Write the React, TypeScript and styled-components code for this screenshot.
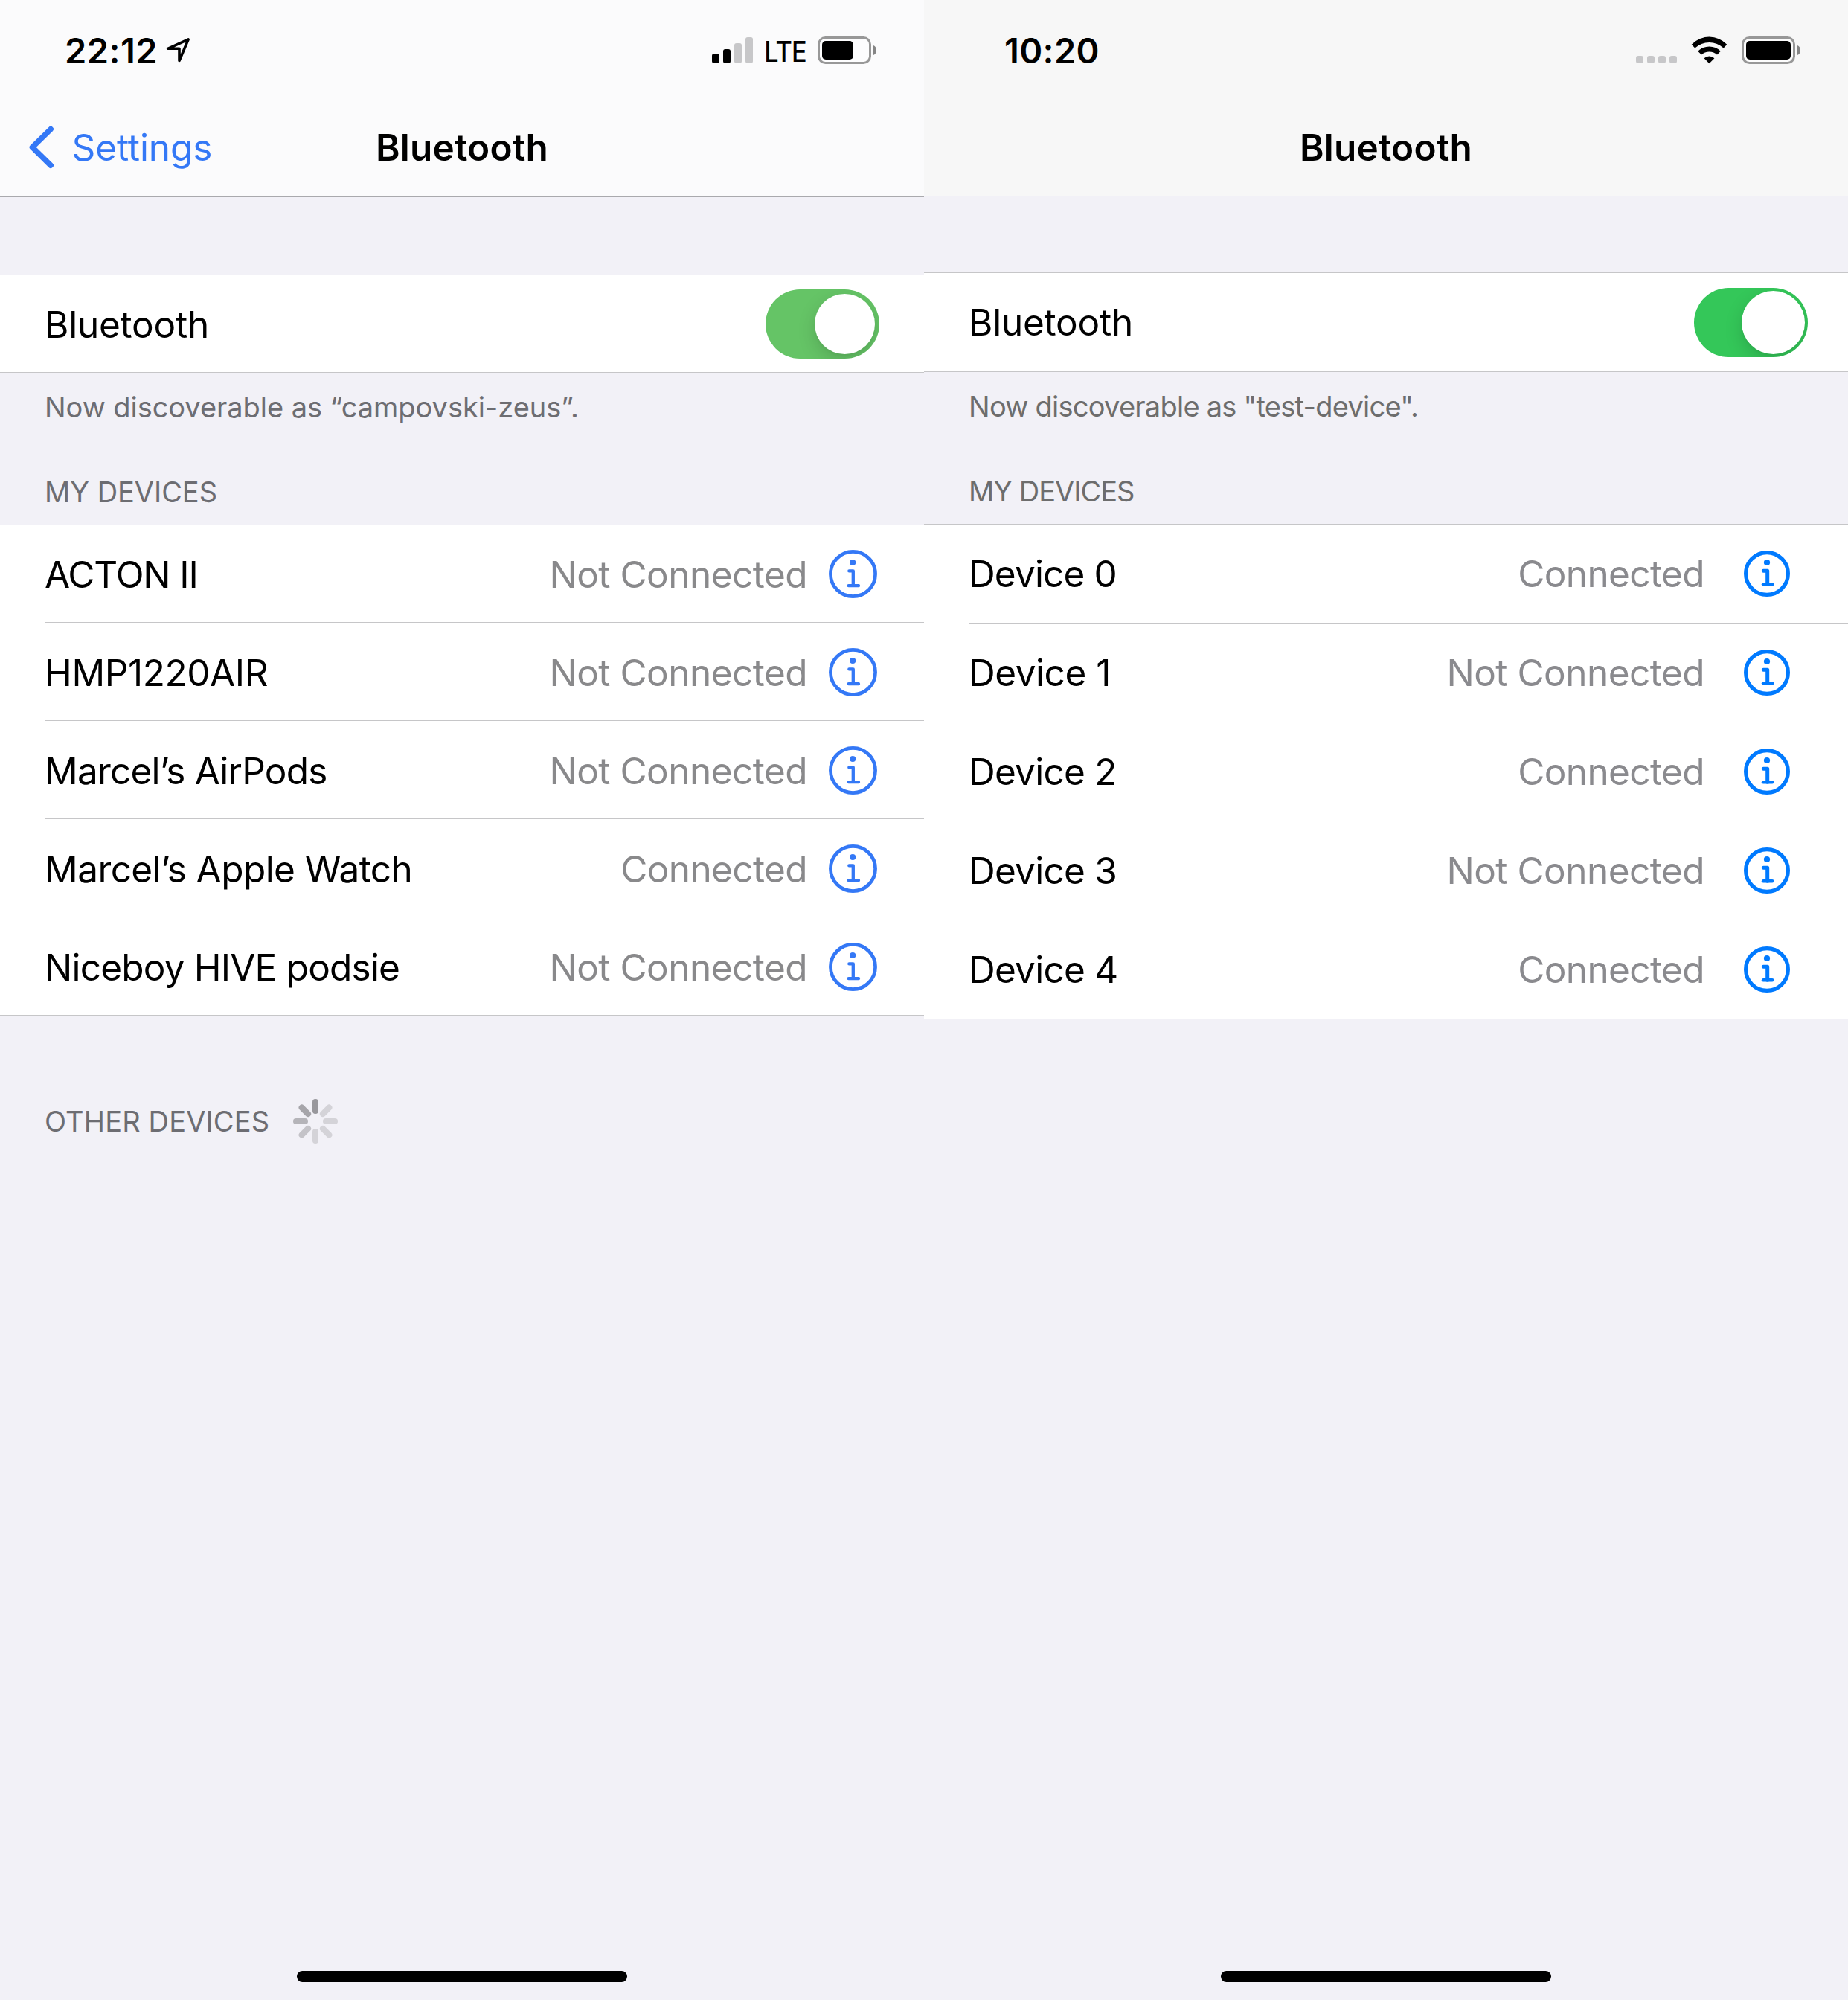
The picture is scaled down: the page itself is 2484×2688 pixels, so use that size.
import React from "react";
import styled, { createGlobalStyle, css, ThemeProvider } from "styled-components";

interface PhoneTheme {
  navBackground: string;
  navBorder: string;
  navHeight: number;
  navPadBottom: number;
  groupTop: number;
  toggleRowHeight: number;
  toggleRowPadTop: number;
  toggleRowPadRight: number;
  labelPadTop: number;
  switchOn: string;
  knobSize: number;
  secondary: string;
  caption: string;
  rowHeight: number;
  firstRowHeight: number;
  rowPadTop: number;
  rowPadRight: number;
  detailGap: number;
  tint: string;
}

type Themed = { theme: PhoneTheme };

const t =
  <K extends keyof PhoneTheme>(key: K) =>
  (p: { theme: unknown }) =>
    (p as Themed).theme[key];

const realDevice: PhoneTheme = {
  navBackground: "#fbfbfc",
  navBorder: "#a9a9ad",
  navHeight: 129,
  navPadBottom: 3,
  groupTop: 104,
  toggleRowHeight: 130,
  toggleRowPadTop: 1,
  toggleRowPadRight: 60,
  labelPadTop: 1,
  switchOn: "#65c466",
  knobSize: 81,
  secondary: "#89898b",
  caption: "#6d6d72",
  rowHeight: 132,
  firstRowHeight: 131,
  rowPadTop: 2,
  rowPadRight: 63,
  detailGap: 29,
  tint: "#3478f6",
};

const simulator: PhoneTheme = {
  navBackground: "#f7f7f7",
  navBorder: "#cfcfd1",
  navHeight: 128,
  navPadBottom: 2,
  groupTop: 102,
  toggleRowHeight: 132,
  toggleRowPadTop: 0,
  toggleRowPadRight: 54,
  labelPadTop: 0,
  switchOn: "#34c759",
  knobSize: 85,
  secondary: "#8a8a8e",
  caption: "#6d6d6d",
  rowHeight: 133,
  firstRowHeight: 133,
  rowPadTop: 0,
  rowPadRight: 78,
  detailGap: 53,
  tint: "#007aff",
};

const SEPARATOR = "#c6c6c8";

const GlobalStyle = createGlobalStyle`
  *, *::before, *::after { box-sizing: border-box; }
  body {
    margin: 0;
    background: #f2f1f7;
    font-family: Inter, Roboto, sans-serif;
    color: #000;
  }
`;

const Screen = styled.main`
  display: grid;
  grid-template-columns: repeat(2, 1242px);
  width: 2484px;
  height: 2688px;
  overflow: hidden;
`;

const Phone = styled.section`
  display: flex;
  flex-direction: column;
  height: 2688px;
  background: #f2f1f7;
`;

const Header = styled.header`
  background: ${t("navBackground")};
  border-bottom: 1px solid ${t("navBorder")};
`;

const StatusBar = styled.div<{ $left: number }>`
  display: flex;
  align-items: center;
  height: 135px;
  padding: 0 64px 0 ${(p) => p.$left}px;
`;

const Clock = styled.time<{ $tracking: number }>`
  font-size: 47px;
  line-height: 57px;
  font-weight: 600;
  letter-spacing: ${(p) => p.$tracking}px;
`;

const LocationSvg = styled.svg`
  width: 36px;
  height: 37px;
  margin-left: 10px;
`;

const StatusIcons = styled.div<{ $gap: number }>`
  display: flex;
  align-items: center;
  gap: ${(p) => p.$gap}px;
  margin-left: auto;
`;

const SignalBars = styled.div`
  display: flex;
  align-items: flex-end;
  gap: 5px;
  height: 35px;
`;

const SignalBar = styled.span<{ $height: number; $active?: boolean }>`
  width: 10px;
  height: ${(p) => p.$height}px;
  border-radius: 3px;
  background: ${(p) => (p.$active ? "#000" : "#c7c7c9")};
`;

const Carrier = styled.span`
  width: 87px;
  padding-top: 3px;
  text-align: center;
  font-size: 38px;
  line-height: 46px;
  font-weight: 500;
  letter-spacing: -1px;
  transform: scaleX(0.9);
`;

const NavBar = styled.nav`
  display: grid;
  grid-template-columns: 1fr auto 1fr;
  align-items: center;
  height: ${t("navHeight")}px;
  padding-bottom: ${t("navPadBottom")}px;
`;

const BackLink = styled.a`
  display: flex;
  align-items: center;
  padding-left: 39px;
  color: ${t("tint")};
  font-size: 49.5px;
  line-height: 60px;
  letter-spacing: -0.1px;
`;

const BackChevron = styled.svg`
  width: 34px;
  height: 58px;
  margin-right: 23.5px;
`;

const NavTitle = styled.h1`
  grid-column: 2;
  margin: 0;
  font-size: 49.5px;
  line-height: 60px;
  font-weight: 600;
  letter-spacing: 0.2px;
`;

const Group = styled.div`
  background: #fff;
  border-top: 1px solid ${SEPARATOR};
`;

const ToggleRow = styled.label`
  display: flex;
  align-items: center;
  justify-content: space-between;
  height: ${t("toggleRowHeight")}px;
  padding: ${t("toggleRowPadTop")}px ${t("toggleRowPadRight")}px 0 60px;
`;

const ToggleGroup = styled(Group)`
  margin-top: ${t("groupTop")}px;
  border-bottom: 1px solid ${SEPARATOR};
`;

const RowLabel = styled.span<{ $tracking?: number }>`
  padding-top: ${t("labelPadTop")}px;
  font-size: 49.5px;
  line-height: 60px;
  letter-spacing: ${(p) => p.$tracking ?? -0.22}px;
  white-space: nowrap;
`;

const Switch = styled.span`
  display: flex;
  align-items: center;
  justify-content: flex-end;
  width: 153px;
  height: 93px;
  padding: 0 ${(p) => (93 - t("knobSize")(p)) / 2}px;
  border-radius: 47px;
  background: ${t("switchOn")};
  overflow: hidden;
`;

const Knob = styled.span`
  width: ${t("knobSize")}px;
  height: ${t("knobSize")}px;
  border-radius: 50%;
  background: #fff;
  box-shadow: 0 9px 24px rgba(0, 0, 0, 0.15), 0 3px 3px rgba(0, 0, 0, 0.03);
`;

const captionText = css`
  color: ${t("caption")};
  font-size: 38px;
  line-height: 46px;
  font-weight: 400;
  white-space: nowrap;
`;

const Footnote = styled.p<{ $tracking?: number }>`
  ${captionText}
  display: flex;
  align-items: center;
  height: 92px;
  margin: 0;
  padding-left: 60px;
  letter-spacing: ${(p) => p.$tracking ?? 0}px;
`;

const SectionHeader = styled.h2<{ $tracking?: number }>`
  ${captionText}
  display: flex;
  align-items: center;
  height: 112px;
  margin: 0;
  padding: 24px 0 0 60px;
  letter-spacing: ${(p) => p.$tracking ?? 0}px;
`;

const SearchHeader = styled(SectionHeader)`
  height: 60px;
  margin-top: 112px;
  padding-top: 0;
  gap: 32px;
`;

const DeviceList = styled(Group).attrs({ as: "ul" })`
  margin: 0;
  padding: 0;
  list-style: none;
`;

const RowBody = styled.div`
  display: flex;
  align-items: center;
  height: 100%;
  padding: ${t("rowPadTop")}px ${t("rowPadRight")}px 0 0;
  border-bottom: 1px solid ${SEPARATOR};
`;

const DeviceItem = styled.li`
  height: ${t("rowHeight")}px;
  padding-left: 60px;

  &:first-child {
    height: ${t("firstRowHeight")}px;
  }
  &:first-child > ${RowBody} {
    padding-top: ${(p) => Math.max(t("rowPadTop")(p) - 1, 0)}px;
  }
  &:last-child {
    border-bottom: 1px solid ${SEPARATOR};
  }
  &:last-child > ${RowBody} {
    border-bottom: 0;
  }
`;

const Detail = styled(RowLabel)`
  margin: 0 ${t("detailGap")}px 0 auto;
  color: ${t("secondary")};
`;

const InfoButton = styled.button`
  display: flex;
  padding: 0;
  border: 0;
  background: none;
  color: ${t("tint")};
`;

const HomeIndicator = styled.div`
  align-self: center;
  width: 444px;
  height: 15px;
  margin: auto 0 24px;
  border-radius: 8px;
  background: #000;
`;

const LocationArrow = () => (
  <LocationSvg viewBox="222 49 36 37" fill="none" stroke="#000" strokeWidth="3.600" strokeLinejoin="round">
    <path d="M253.200 52.800 L225.600 65.300 H241 V81.500 Z" />
  </LocationSvg>
);

const Battery = ({ level }: { level: number }) => (
  <svg width="79" height="37" viewBox="0 0 79 37">
    <rect x="1.5" y="1.5" width="69" height="34" rx="9" fill="#fff" fillOpacity="0.6" stroke="#989898" strokeWidth="3" />
    <rect x="6" y="6" width={60 * level} height="25" rx="5" fill="#000" />
    <path d="M75 12 C80.300 14 80.300 23 75 25 Z" fill="#858585" />
  </svg>
);

const Wifi = () => (
  <svg width="49" height="37" viewBox="0 0 49 37" fill="#000">
    <path d="M0.700 10.700 A33 33 0 0 1 48.300 10.700 L43.700 15.400 A28.500 28.500 0 0 0 5.300 15.400 Z" />
    <path d="M9.200 19.700 A22 22 0 0 1 39.800 19.700 L35 24.600 A15.500 15.500 0 0 0 14 24.600 Z" />
    <path d="M17.600 29.200 A10 10 0 0 1 31.400 29.200 L24.500 36.200 Z" />
  </svg>
);

const InfoIconThin = () => (
  <svg width="65" height="65" viewBox="0 0 65 65" fill="none" stroke="currentColor">
    <circle cx="32.500" cy="32.500" r="30.100" strokeWidth="4.700" />
    <circle cx="32.200" cy="17" r="4" fill="currentColor" stroke="none" />
    <path d="M27.300 28.400 H32.800 V48.200 M26.700 48.200 H40" strokeWidth="4.300" strokeLinecap="round" strokeLinejoin="round" />
  </svg>
);

const InfoIconBold = () => (
  <svg width="62" height="62" viewBox="0 0 62 62" fill="none" stroke="currentColor">
    <circle cx="31" cy="31" r="28.400" strokeWidth="5.200" />
    <circle cx="31" cy="16" r="4.100" fill="currentColor" stroke="none" />
    <path d="M26.300 27.300 H31.700 V45.200" strokeWidth="5" strokeLinecap="round" strokeLinejoin="round" />
    <path d="M26 45.200 H38.200" strokeWidth="4.400" strokeLinecap="round" />
  </svg>
);

const SPOKES = ["#98979c", "#d4d3d8", "#d4d3d8", "#d4d3d8", "#d4d3d8", "#c4c3c8", "#b5b4b9", "#a6a5aa"];

const Spinner = () => (
  <svg width="60" height="60" viewBox="-30 -30 60 60">
    {SPOKES.map((fill, i) => (
      <rect key={i} x="-4" y="-30" width="8" height="20" rx="4" fill={fill} transform={`rotate(${i * 45})`} />
    ))}
  </svg>
);

interface Device {
  name: string;
  tracking: number;
  connected: boolean;
}

const pairedDevices: Device[] = [
  { name: "ACTON II", tracking: -1.15, connected: false },
  { name: "HMP1220AIR", tracking: -0.4, connected: false },
  { name: "Marcel’s AirPods", tracking: -0.77, connected: false },
  { name: "Marcel’s Apple Watch", tracking: -0.56, connected: true },
  { name: "Niceboy HIVE podsie", tracking: -0.8, connected: false },
];

const testDevices: Device[] = [
  { name: "Device 0", tracking: -0.85, connected: true },
  { name: "Device 1", tracking: -0.45, connected: false },
  { name: "Device 2", tracking: -0.75, connected: true },
  { name: "Device 3", tracking: -0.75, connected: false },
  { name: "Device 4", tracking: -0.75, connected: true },
];

const Devices = ({ devices, icon }: { devices: Device[]; icon: React.ReactNode }) => (
  <DeviceList>
    {devices.map((d) => (
      <DeviceItem key={d.name}>
        <RowBody>
          <RowLabel $tracking={d.tracking}>{d.name}</RowLabel>
          <Detail $tracking={d.connected ? -0.62 : -0.53}>{d.connected ? "Connected" : "Not Connected"}</Detail>
          <InfoButton aria-label={`About ${d.name}`}>{icon}</InfoButton>
        </RowBody>
      </DeviceItem>
    ))}
  </DeviceList>
);

const BluetoothToggle = () => (
  <ToggleGroup>
    <ToggleRow>
      <RowLabel>Bluetooth</RowLabel>
      <Switch>
        <Knob />
      </Switch>
    </ToggleRow>
  </ToggleGroup>
);

export default function App() {
  return (
    <>
      <GlobalStyle />
      <Screen>
        <ThemeProvider theme={realDevice}>
          <Phone>
            <Header>
              <StatusBar $left={87}>
                <Clock $tracking={0.45}>22:12</Clock>
                <LocationArrow />
                <StatusIcons $gap={0}>
                  <SignalBars>
                    <SignalBar $height={13} $active />
                    <SignalBar $height={19} $active />
                    <SignalBar $height={27} />
                    <SignalBar $height={35} />
                  </SignalBars>
                  <Carrier>LTE</Carrier>
                  <Battery level={0.7} />
                </StatusIcons>
              </StatusBar>
              <NavBar>
                <BackLink>
                  <BackChevron viewBox="39 169 34 58" fill="none" stroke="currentColor" strokeWidth="7.500" strokeLinecap="round" strokeLinejoin="round">
                    <path d="M68.200 173.600 L43.400 197.900 L68.200 222.200" />
                  </BackChevron>
                  Settings
                </BackLink>
                <NavTitle>Bluetooth</NavTitle>
              </NavBar>
            </Header>
            <BluetoothToggle />
            <Footnote $tracking={-0.05}>Now discoverable as “campovski-zeus”.</Footnote>
            <SectionHeader $tracking={-0.05}>MY DEVICES</SectionHeader>
            <Devices devices={pairedDevices} icon={<InfoIconThin />} />
            <SearchHeader $tracking={0.15}>
              OTHER DEVICES
              <Spinner />
            </SearchHeader>
            <HomeIndicator />
          </Phone>
        </ThemeProvider>
        <ThemeProvider theme={simulator}>
          <Phone>
            <Header>
              <StatusBar $left={108}>
                <Clock $tracking={0.35}>10:20</Clock>
                <StatusIcons $gap={19}>
                  <SignalBars>
                    <SignalBar $height={10} />
                    <SignalBar $height={10} />
                    <SignalBar $height={10} />
                    <SignalBar $height={10} />
                  </SignalBars>
                  <Wifi />
                  <Battery level={1} />
                </StatusIcons>
              </StatusBar>
              <NavBar>
                <NavTitle>Bluetooth</NavTitle>
              </NavBar>
            </Header>
            <BluetoothToggle />
            <Footnote $tracking={-0.75}>Now discoverable as "test-device".</Footnote>
            <SectionHeader $tracking={-1}>MY DEVICES</SectionHeader>
            <Devices devices={testDevices} icon={<InfoIconBold />} />
            <HomeIndicator />
          </Phone>
        </ThemeProvider>
      </Screen>
    </>
  );
}
